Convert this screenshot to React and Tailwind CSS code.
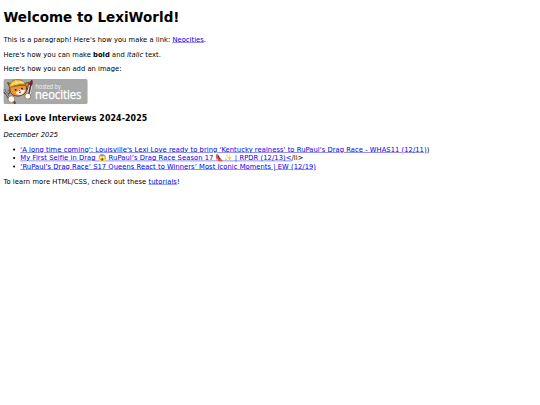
const interviews = [
  {
    title: "'A long time coming': Louisville's Lexi Love ready to bring 'Kentucky realness' to RuPaul's Drag Race - WHAS11 (12/11)",
    after: ")",
    tracking: "tracking-[0.12px]",
  },
  {
    title: (
      <>
        My First Selfie in Drag <Emoji>😱</Emoji> RuPaul’s Drag Race Season 17 <Emoji>👠✨</Emoji> | RPDR (12/13)&lt;
      </>
    ),
    after: "/li>",
    tracking: "tracking-[0.16px]",
  },
  {
    title: "‘RuPaul’s Drag Race’ S17 Queens React to Winners’ Most Iconic Moments | EW (12/19)",
    after: "",
    tracking: "tracking-[0.1px]",
  },
];

function Emoji({ children }) {
  return <span className="font-['Noto_Color_Emoji',sans-serif]">{children}</span>;
}

function Link({ children }) {
  return (
    <a href="#" className="text-[#0000ee] underline">
      {children}
    </a>
  );
}

// "hosted by neocities" badge
function NeocitiesBadge() {
  return (
    <svg viewBox="0 0 200 60" className="block w-[200px] h-[60px]" role="img" aria-label="Hosted by Neocities">
      <rect width="200" height="60" rx="6" fill="#a8a8a8" />
      {/* wrench */}
      <path d="M3 25v7l5 4 5-3v-7M8 36l5 9M24 52l4 7" fill="none" stroke="#444" strokeWidth="5" />
      <path d="M3 26v5l5 4 5-3v-5M8 36l5 8" fill="none" stroke="#c9d2d6" strokeWidth="2" />
      {/* cat ears and head */}
      <path d="M16 22L10 9l13 4zM48 12l12-4-3 17z" fill="#f09a3c" stroke="#4a3018" strokeWidth="2" />
      <path d="M16 18c-2 10 1 18 9 21 9 4 20 1 26-5 5-5 5-12 2-20z" fill="#ee9338" stroke="#4a3018" strokeWidth="2" />
      <path d="M29 33c4-3 7-4 10-9 4 3 8 3 12 2 1 5-4 10-10 12-5 1-9-1-12-5z" fill="#fff4e4" />
      {/* hard hat */}
      <path d="M15 21C13 10 21 2 34 2c10 0 17 5 18 12-12-2-24 1-37 7z" fill="#f2c544" stroke="#7d5a1c" strokeWidth="1.5" />
      <path d="M20 13c8-5 18-7 28-5M29 4l4 9" fill="none" stroke="#ffe88a" strokeWidth="2.5" />
      <path d="M17 20c12-5 24-7 36-5" fill="none" stroke="#a97820" strokeWidth="2" />
      <circle cx="29" cy="26" r="2.2" fill="#2b1c14" />
      <circle cx="44" cy="23" r="2.2" fill="#2b1c14" />
      <path d="M36 27l5-1-2 3zM36 31l6-1-2 5z" fill="#8d3528" />
      {/* brush */}
      <path d="M60 38l5-24" stroke="#fff" strokeWidth="7" />
      <path d="M60 38l5-24" stroke="#6b2d22" strokeWidth="4" />
      <path d="M62 14c0-6 2-9 6-11 1 5 1 8-1 12z" fill="#8e1f2c" stroke="#4a1218" strokeWidth="1.5" />
      {/* paws */}
      <circle cx="19" cy="48" r="8" fill="#fffdf8" stroke="#5f4a38" strokeWidth="1.5" />
      <circle cx="58" cy="41" r="7" fill="#fffdf8" stroke="#5f4a38" strokeWidth="1.5" />
      <path d="M52 44c1 3 4 5 8 4M12 52c2 4 7 5 11 3" fill="none" stroke="#e8a258" strokeWidth="2" />
      <text x="76" y="23" textLength="60" lengthAdjust="spacingAndGlyphs" fill="#f5f5f5" fontFamily="Open Sans, sans-serif" fontSize="15">
        hosted by
      </text>
      <text x="75" y="47" textLength="110" lengthAdjust="spacingAndGlyphs" fill="#ffffff" stroke="#ffffff" strokeWidth="0.8" fontFamily="Open Sans, sans-serif" fontSize="30">
        neocities
      </text>
    </svg>
  );
}

export default function App() {
  return (
    <div className="h-screen w-screen overflow-hidden bg-white">
      {/* 1280px wide page shown as a thumbnail */}
      <main className="flow-root h-[960px] w-[1280px] origin-top-left scale-[0.421875] px-2 font-['DejaVu_Sans',Verdana,sans-serif] text-base leading-[19px] text-black">
        <h1 className="mt-[23px] mb-[23px] text-[32px] leading-[38px] font-bold tracking-[0.05px]">Welcome to LexiWorld!</h1>

        <p className="my-4 tracking-[0.09px]">
          This is a paragraph! Here's how you make a link: <Link>Neocities</Link>.
        </p>
        <p className="my-4 tracking-[0.06px]">
          Here's how you can make <strong>bold</strong> and <em>italic</em> text.
        </p>
        <p className="mt-4 mb-3.5 tracking-[0.08px]">Here's how you can add an image:</p>

        <div className="mb-[22px]">
          <NeocitiesBadge />
        </div>

        <h3 className="mb-[19px] text-[18.72px] leading-[22px] font-bold tracking-[0.21px]">Lexi Love Interviews 2024-2025</h3>
        <p className="my-4 italic tracking-[0.06px]">December 2025</p>

        <ul className="mt-4 mb-[15px] list-disc pl-10">
          {interviews.map((item, i) => (
            <li key={i} className={`h-5 whitespace-nowrap ${item.tracking}`}>
              <Link>{item.title}</Link>
              {item.after}
            </li>
          ))}
        </ul>

        <p className="tracking-[0.14px]">
          To learn more HTML/CSS, check out these <Link>tutorials</Link>!
        </p>
      </main>
    </div>
  );
}
